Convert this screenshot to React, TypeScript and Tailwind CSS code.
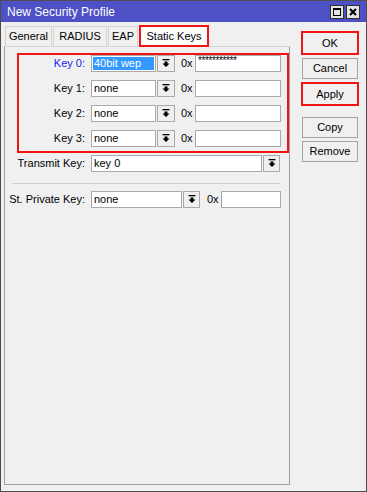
import React from 'react';

const RED = 'border-[#f01414]';

function DropArrow() {
  return (
    <svg width="8" height="9" viewBox="0 0 8 9" className="block">
      <rect x="0.5" y="0" width="7" height="1.3" fill="#000" />
      <polygon points="2.5,2.5 5.5,2.5 5.5,4.5 7.5,4.5 4,8 0.5,4.5 2.5,4.5" fill="#000" />
    </svg>
  );
}

function Field({ value, w, selected }: { value?: string; w: string; selected?: boolean }) {
  return (
    <div className={`${w} h-[17px] shrink-0 border border-[#a9a9a9] bg-white p-[1px]`}>
      <div className={`h-full pl-[1px] leading-[13px] whitespace-nowrap ${selected ? 'bg-[#3399ff] text-white' : ''}`}>
        {value}
      </div>
    </div>
  );
}

function ArrowBtn({ w }: { w: string }) {
  return (
    <div className={`${w} h-[17px] ml-[1px] shrink-0 border border-[#a9a9a9] bg-[#f0f0f0] flex items-center justify-center`}>
      <DropArrow />
    </div>
  );
}

function KeyRow({ label, value, active }: { label: string; value: string; active?: boolean }) {
  return (
    <div className="flex items-center h-[17px]">
      <span className={`w-[66px] text-right ${active ? 'text-[#1c1cf0]' : ''}`}>{label}</span>
      <div className="ml-[6px] flex items-center">
        <Field w="w-[65px]" value={value} selected={active} />
        <ArrowBtn w="w-[18px]" />
        <span className="w-[20px] pl-[6px]">0x</span>
        <div className="w-[86px] h-[17px] border border-[#a9a9a9] bg-white pl-[2px] text-[10px] leading-[9px] tracking-[-0.4px] overflow-hidden">
          {active ? '***********' : ''}
        </div>
      </div>
    </div>
  );
}

function Btn({ label }: { label: string }) {
  return (
    <div className="mx-[1px] w-[56px] h-[21px] border border-[#a3a3a3] bg-[#f0f0f0] flex items-center justify-center">
      {label}
    </div>
  );
}

function RedBtn({ label }: { label: string }) {
  return (
    <div className={`w-[58px] h-[24px] border-2 ${RED} bg-[#f0f0f0] flex items-center justify-center`}>
      {label}
    </div>
  );
}

export default function App() {
  return (
    <div className="w-[367px] h-[492px] bg-[#f0f0f0] border border-[#4d4d4d] flex flex-col text-[11px] text-black font-['Liberation_Sans',Arial,sans-serif]">
      {/* title bar */}
      <div className="h-[21px] bg-[#4e50c6] flex items-center justify-between pl-[6px] pr-[6px]">
        <span className="text-white text-[12px]">New Security Profile</span>
        <div className="flex gap-[2px]">
          <div className="w-[14px] h-[14px] bg-[#e4e4e4] border border-[#303030] flex items-center justify-center">
            <div className="w-[8px] h-[8px] border border-black border-t-2" />
          </div>
          <div className="w-[14px] h-[14px] bg-[#e4e4e4] border border-[#303030] flex items-center justify-center">
            <svg width="8" height="8" viewBox="0 0 8 8">
              <path d="M1 1 L7 7 M7 1 L1 7" stroke="#000" strokeWidth="2" />
            </svg>
          </div>
        </div>
      </div>

      <div className="flex flex-1 pl-[3px] pt-[3px] pb-[6px]">
        {/* left: tabs + panel */}
        <div className="w-[286px] flex flex-col">
          <div className="flex items-end h-[21px] relative z-10">
            <div className="ml-[1px] w-[47px] h-[20px] border border-b-0 border-[#d4d4d4] flex items-center justify-center">General</div>
            <div className="ml-[1px] w-[54px] h-[20px] border border-b-0 border-[#d4d4d4] flex items-center justify-center">RADIUS</div>
            <div className="ml-[1px] w-[30px] h-[20px] border border-b-0 border-[#d4d4d4] flex items-center justify-center">EAP</div>
            <div className={`ml-[1px] w-[70px] h-[22px] -mb-[1px] border-2 ${RED} bg-white flex items-center justify-center`}>Static Keys</div>
          </div>
          <div className="flex-1 border border-[#a0a0a0] border-t-[#d4d4d4] flex flex-col">
            <div className={`ml-[12px] mt-[6px] w-[272px] border-2 ${RED} flex flex-col gap-[8px] pb-[4px]`}>
              <KeyRow label="Key 0:" value="40bit wep" active />
              <KeyRow label="Key 1:" value="none" />
              <KeyRow label="Key 2:" value="none" />
              <KeyRow label="Key 3:" value="none" />
            </div>

            <div className="mt-[2px] flex items-center h-[17px]">
              <span className="w-[80px] text-right">Transmit Key:</span>
              <div className="ml-[6px] flex items-center">
                <Field w="w-[171px]" value="key 0" />
                <ArrowBtn w="w-[17px]" />
              </div>
            </div>

            <div className="mt-[11px] ml-[7px] w-[268px] h-px bg-[#cfcfcf]" />

            <div className="mt-[7px] flex items-center h-[17px]">
              <span className="w-[80px] text-right">St. Private Key:</span>
              <div className="ml-[6px] flex items-center">
                <Field w="w-[91px]" value="none" />
                <ArrowBtn w="w-[17px]" />
                <span className="w-[21px] pl-[7px]">0x</span>
                <div className="w-[60px] h-[17px] border border-[#a9a9a9] bg-white" />
              </div>
            </div>
          </div>
        </div>

        {/* right: buttons */}
        <div className="ml-[11px] w-[58px] flex flex-col pt-[6px]">
          <RedBtn label="OK" />
          <div className="mt-[3px]"><Btn label="Cancel" /></div>
          <div className="mt-[3px]"><RedBtn label="Apply" /></div>
          <div className="mt-[11px]"><Btn label="Copy" /></div>
          <div className="mt-[3px]"><Btn label="Remove" /></div>
        </div>
      </div>
    </div>
  );
}
